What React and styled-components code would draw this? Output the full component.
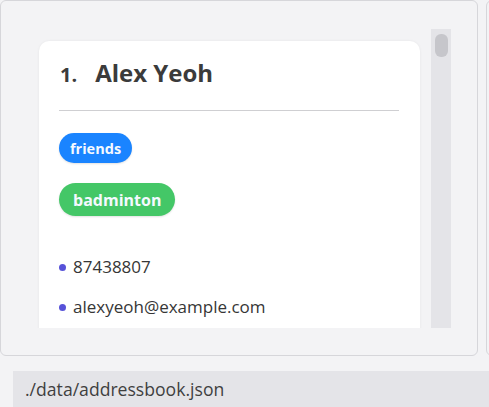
import React from "react";
import styled, { createGlobalStyle } from "styled-components";

const GlobalStyle = createGlobalStyle`
    body {
        margin: 0;
        background: #f3f3f5;
        font-family: "Open Sans", "Liberation Sans", sans-serif;
        overflow: hidden;
    }
`;

const Page = styled.div`
    display: flex;
    flex-direction: column;
    height: 407px;
`;

const PanelRow = styled.div`
    display: flex;
    gap: 8px;
`;

const Panel = styled.div`
    box-sizing: border-box;
    flex: 0 0 ${props => props.width};
    height: 356px;
    padding: 28px 26px 27px 26px;
    border: 1px solid #d6d6da;
    border-radius: 6px;
    background: #f3f3f5;
`;

const ScrollArea = styled.div`
    display: flex;
    height: 299px;
`;

const Viewport = styled.div`
    flex: 1;
    overflow: hidden;
    padding: 12px 11px 0 12px;
`;

const Track = styled.div`
    box-sizing: border-box;
    width: 20px;
    padding: 5px 3px 0 4px;
    background: #e4e4e8;
`;

const Thumb = styled.div`
    height: 23px;
    border-radius: 6px;
    background: #c6c6cb;
`;

const Card = styled.div`
    background: #ffffff;
    border-radius: 10px;
    box-shadow: 0 0 3px rgba(0, 0, 0, 0.06);
    padding: 16px 21px 12px 20px;
    min-height: 320px;
`;

const Title = styled.div`
    display: flex;
    align-items: baseline;
    line-height: 32px;
    color: #3b3b3b;
    font-weight: 700;
`;

const Index = styled.span`
    font-size: 20px;
    margin-left: 1px;
    margin-right: 18px;
`;

const Name = styled.span`
    font-size: 24px;
`;

const Divider = styled.hr`
    margin: 19px 0 22px 0;
    border: none;
    border-top: 1px solid #cfcfd2;
`;

const Tags = styled.div`
    display: flex;
    flex-direction: column;
    align-items: flex-start;
    gap: 20px;
`;

const Tag = styled.span`
    display: inline-flex;
    align-items: center;
    height: ${props => props.height}px;
    padding: 0 ${props => props.pad}px;
    border-radius: ${props => props.height / 2}px;
    background: ${props => props.color};
    color: #f4f9ff;
    font-size: ${props => props.size}px;
    font-weight: 700;
    box-shadow: 0 1px 2px rgba(0, 0, 0, 0.12);
`;

const Details = styled.ul`
    list-style: none;
    margin: 39px 0 0 0;
    padding: 0;
    display: flex;
    flex-direction: column;
    gap: 16px;
`;

const Detail = styled.li`
    display: flex;
    align-items: center;
    gap: 7px;
    line-height: 24px;
    font-size: 17px;
    color: #363636;

    &::before {
        content: "";
        width: 7px;
        height: 7px;
        border-radius: 50%;
        background: #5752d8;
    }
`;

const StatusBar = styled.div`
    margin: 15px 0 0 13px;
    flex: 1;
    display: flex;
    align-items: center;
    padding-left: 12px;
    background: #e4e4e8;
    color: #3f3f3f;
    font-size: 17.6px;
`;

const tags = [
    { label: "friends", color: "#1a84ff", height: 30, pad: 11, size: 14.5 },
    { label: "badminton", color: "#44c767", height: 33, pad: 14, size: 16 },
];

export default function App() {
    return (
        <Page>
            <GlobalStyle />
            <PanelRow>
                <Panel width="478px">
                    <ScrollArea>
                        <Viewport>
                            <Card>
                                <Title>
                                    <Index>1.</Index>
                                    <Name>Alex Yeoh</Name>
                                </Title>
                                <Divider />
                                <Tags>
                                    {tags.map(t => (
                                        <div key={t.label}>
                                            <Tag color={t.color} height={t.height} pad={t.pad} size={t.size}>
                                                {t.label}
                                            </Tag>
                                        </div>
                                    ))}
                                </Tags>
                                <Details>
                                    <Detail>87438807</Detail>
                                    <Detail>alexyeoh@example.com</Detail>
                                </Details>
                            </Card>
                        </Viewport>
                        <Track>
                            <Thumb />
                        </Track>
                    </ScrollArea>
                </Panel>
                <Panel width="400px" />
            </PanelRow>
            <StatusBar>./data/addressbook.json</StatusBar>
        </Page>
    );
}
